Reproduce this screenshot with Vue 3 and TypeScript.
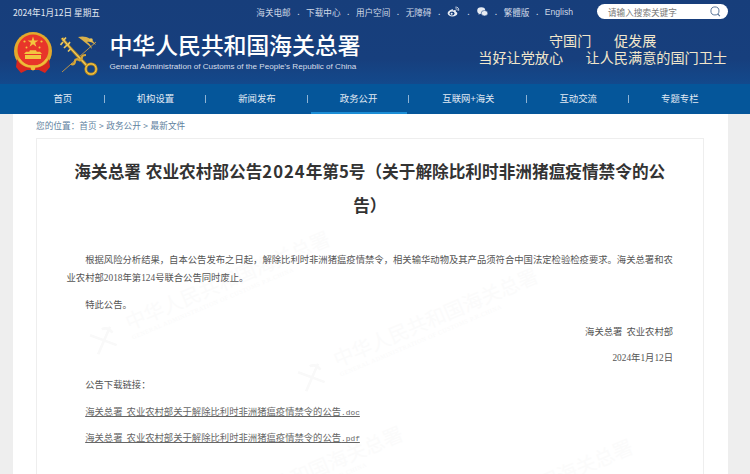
<template>
  <div class="page">
    <header class="site-head">
      <div class="top-bar">
        <span class="today">2024年1月12日 星期五</span>
        <div class="top-right">
          <nav class="top-links">
            <template v-for="(link, i) in topLinks" :key="link">
              <span v-if="i > 0" class="dot">.</span>
              <svg v-if="link === 'weibo'" class="top-icon" viewBox="0 0 14 12" width="13" height="11">
                <path d="M5.6 3.6C2.8 4.4.6 6.2.6 8c0 2 2.5 3.4 5.2 3.4 3 0 5.4-1.6 5.4-3.3 0-1.1-1-1.5-1.7-1.7.5-1.3 0-2-1-2.1-.6 0-1.5.3-2.2.6.3-1 .1-1.6-.7-1.3z" fill="#e8edf4" />
                <ellipse cx="5.4" cy="8.2" rx="2.7" ry="2.1" fill="#173f7d" />
                <circle cx="5" cy="8.4" r="1.1" fill="#e8edf4" />
                <path d="M9.4 1.2c2-.4 3.8 1.2 3.3 3.6M9.6 3c1-.2 1.7.5 1.5 1.5" fill="none" stroke="#e8edf4" stroke-width=".9" stroke-linecap="round" />
              </svg>
              <svg v-else-if="link === 'wechat'" class="top-icon" viewBox="0 0 12 11" width="11" height="10">
                <ellipse cx="4.6" cy="4" rx="4.4" ry="3.6" fill="#e8edf4" />
                <path d="M2 6.6 1.7 8.6 4 7.2z" fill="#e8edf4" />
                <ellipse cx="8.2" cy="6.8" rx="3.6" ry="3" fill="#e8edf4" stroke="#173f7d" stroke-width=".6" />
              </svg>
              <a v-else class="top-link">{{ link }}</a>
            </template>
          </nav>
          <div class="search">
            <span class="search-text">请输入搜索关键字</span>
            <svg viewBox="0 0 12 12" width="11" height="11">
              <circle cx="5.4" cy="5.4" r="4.4" fill="none" stroke="#4d6a90" stroke-width="1" />
              <path d="M8.6 8.8 10.8 11" stroke="#4d6a90" stroke-width="1.1" />
            </svg>
          </div>
        </div>
      </div>

      <div class="brand-row">
        <div class="brand">
          <svg class="emblem" viewBox="0 0 40 42" width="40" height="42">
            <circle cx="20" cy="19" r="19" fill="#e3a92c" />
            <circle cx="20" cy="18" r="15.5" fill="#e8352a" />
            <path d="m20 4.5 1.3 3.9h4.1l-3.3 2.4 1.3 3.9-3.4-2.4-3.4 2.4 1.3-3.9-3.3-2.4h4.1z" fill="#f3c63f" />
            <g fill="#f3c63f">
              <circle cx="11.5" cy="9.5" r="1.1" />
              <circle cx="28.5" cy="9.5" r="1.1" />
              <circle cx="13.5" cy="15.5" r="1" />
              <circle cx="26.5" cy="15.5" r="1" />
              <path d="M11 22h18l-2-2.2h-3.2l-.8-1.6h-6l-.8 1.6H13z" />
              <rect x="12" y="23" width="16" height="4" />
            </g>
            <path d="M4 27c3 6 9 9 16 9s13-3 16-9l1 8-5 6-6-3h-12l-6 3-5-6z" fill="#d7261f" />
            <path d="M6 27c3 5 8 7.6 14 7.6S31 32 34 27" fill="none" stroke="#f0bd3a" stroke-width="2" />
            <circle cx="20" cy="36" r="2.4" fill="#f0bd3a" />
          </svg>
          <svg class="customs" viewBox="0 0 40 42" width="40" height="42">
            <path d="M2 38 36 8" stroke="#b9924a" stroke-width="1" />
            <path d="M2 4c4 6 17 19 25 28" fill="none" stroke="#b98a20" stroke-width="3" />
            <path d="M2 4c4 6 17 19 25 28" fill="none" stroke="#f0cf6a" stroke-width="1.2" />
            <path d="M3 8 .5 11M6 3.5 3 7M7 11 4 14M10 8 7.5 11.5M10.5 15l-2.5 2.5" stroke="#ecc85f" stroke-width="1.7" />
            <circle cx="31" cy="35" r="5.2" fill="none" stroke="#c8951f" stroke-width="2.8" />
            <circle cx="31" cy="35" r="5.2" fill="none" stroke="#f1c84f" stroke-width="1" />
            <path d="M11 30c3 1 4-1 4-3s3-2 4-1 3-1 3-3 3-2 4-2" fill="none" stroke="#d5a536" stroke-width="2.2" />
            <path d="M18 3c7-2 14 1 18 8-4-3-7-4-9-3 2 1 4 3 5 7-4-5-9-8-14-12z" fill="#d9b04a" />
            <circle cx="31" cy="6" r="1.8" fill="#e9c35a" />
          </svg>
          <div class="brand-text">
            <div class="brand-cn">中华人民共和国海关总署</div>
            <div class="brand-en">General Administration of Customs of the People's Republic of China</div>
          </div>
        </div>
        <div class="motto">
          <div class="motto-line"><span>守国门</span><span>促发展</span></div>
          <div class="motto-line"><span>当好让党放心</span><span>让人民满意的国门卫士</span></div>
        </div>
      </div>
    </header>

    <nav class="main-nav">
      <a
        v-for="item in navItems"
        :key="item.label"
        class="nav-item"
        :class="{ active: item.active, wide: item.label.length > 4 }"
      >{{ item.label }}</a>
    </nav>

    <main class="content">
      <div class="crumbs">您的位置：首页 &gt; 政务公开 &gt; 最新文件</div>
      <article class="card">
        <div class="watermarks">
          <div v-for="(m, i) in marks" :key="i" class="mark" :style="{ left: m.x + 'px', top: m.y + 'px' }">
            <svg viewBox="0 0 24 24" width="26" height="26" class="mark-icon">
              <path d="M2 3 21 21M2 22 22 3M14 2c4 0 7 3 8 7" fill="none" stroke="#f9f9f9" stroke-width="2.4" />
            </svg>
            <div>
              <div class="mark-cn">中华人民共和国海关总署</div>
              <div class="mark-en">GENERAL ADMINISTRATION OF CUSTOMS P.R.CHINA</div>
            </div>
          </div>
        </div>
        <div class="card-body">
          <h1 class="title">海关总署 农业农村部公告<span class="year">2024</span>年第5号（关于解除比利时非洲猪瘟疫情禁令的公告）</h1>
          <p class="indent">根据风险分析结果，自本公告发布之日起，解除比利时非洲猪瘟疫情禁令，相关输华动物及其产品须符合中国法定检验检疫要求。海关总署和农业农村部<span class="num">2018</span>年第<span class="num">124</span>号联合公告同时废止。</p>
          <p class="indent">特此公告。</p>
          <p class="right">海关总署 农业农村部</p>
          <p class="right"><span class="num">2024</span>年<span class="num">1</span>月<span class="num">12</span>日</p>
          <p class="indent">公告下载链接：</p>
          <p class="indent"><a class="file">海关总署 农业农村部关于解除比利时非洲猪瘟疫情禁令的公告<span class="ext">.doc</span></a></p>
          <p class="indent"><a class="file">海关总署 农业农村部关于解除比利时非洲猪瘟疫情禁令的公告<span class="ext">.pdf</span></a></p>
        </div>
      </article>
    </main>
  </div>
</template>

<script setup lang="ts">
interface NavItem {
  label: string;
  active?: boolean;
}

const topLinks: string[] = [
  "海关电邮",
  "下载中心",
  "用户空间",
  "无障碍",
  "weibo",
  "wechat",
  "繁體版",
  "English",
];

const navItems: NavItem[] = [
  { label: "首页" },
  { label: "机构设置" },
  { label: "新闻发布" },
  { label: "政务公开", active: true },
  { label: "互联网+海关" },
  { label: "互动交流" },
  { label: "专题专栏" },
];

// 水印位置，相对卡片
const marks = [
  { x: 59.5, y: 187.5 },
  { x: 267.5, y: 224.5 },
  { x: 132.5, y: 383 },
  { x: 362.5, y: 395.5 },
];
</script>

<style scoped>
.page {
  height: 474px;
  overflow: hidden;
  background: #eeeeee;
  font-family: "Noto Sans CJK SC", sans-serif;
}

.site-head {
  height: 84px;
  background: linear-gradient(#173e7b 0, #173f7d 70%, #13498c 100%);
}

.top-bar {
  display: flex;
  justify-content: space-between;
  align-items: center;
  height: 23px;
  padding: 0 22px 0 13px;
}

.today {
  font-size: 8.6px;
  color: #e4e9f2;
}

.top-right {
  display: flex;
  align-items: center;
  gap: 24px;
}

.top-links {
  display: flex;
  align-items: center;
  gap: 6.5px;
  font-size: 8.6px;
  color: #cfd8e6;
}

.top-link {
  font-family: "Liberation Sans", "Noto Sans CJK SC", sans-serif;
  white-space: nowrap;
}

.dot {
  position: relative;
  top: -1px;
  color: #cfd8e6;
}

.top-icon {
  display: block;
  margin: 0 0.5px;
}

.search {
  display: flex;
  align-items: center;
  justify-content: space-between;
  width: 131px;
  height: 15px;
  padding: 0 7px 0 11px;
  box-sizing: border-box;
  background: #ffffff;
  border-radius: 8px;
}

.search-text {
  font-size: 8.6px;
  color: #777777;
}

.brand-row {
  display: flex;
  justify-content: space-between;
  padding: 9px 23px 0 13px;
}

.brand {
  display: flex;
  align-items: flex-start;
}

.customs {
  margin: 2px 0 0 7px;
}

.brand-text {
  margin: 0 0 0 9.5px;
}

.brand-cn {
  margin-top: -2px;
  font-size: 23px;
  line-height: 29px;
  letter-spacing: -0.2px;
  font-weight: 500;
  color: #ffffff;
  white-space: nowrap;
}

.brand-en {
  font-family: "Liberation Sans", sans-serif;
  font-size: 8.1px;
  line-height: 9px;
  margin-top: 3px;
  color: #d8dfea;
  white-space: nowrap;
}

.motto {
  color: #f2e7cb;
  font-size: 14.15px;
  line-height: 17px;
  text-align: center;
}

.motto-line {
  display: flex;
  justify-content: center;
  gap: 22.5px;
}

.main-nav {
  display: flex;
  height: 30px;
  padding-left: 3px;
  background: #05569a;
}

.nav-item {
  position: relative;
  width: 101.6px;
  box-sizing: border-box;
  font-size: 9.4px;
  line-height: 29px;
  text-align: center;
  color: #e2eaf4;
}

.nav-item:first-child {
  padding-left: 18px;
}

.nav-item.wide {
  width: 118px;
}

.nav-item:not(:last-child)::after {
  content: "";
  position: absolute;
  right: 0;
  top: 11px;
  width: 1px;
  height: 8px;
  background: #8fb3d4;
}

.nav-item.active::before {
  content: "";
  position: absolute;
  left: 3px;
  right: 2px;
  bottom: 0;
  height: 2px;
  background: #1c8ed6;
}

.content {
  width: 715px;
  height: 360px;
  margin-left: 13px;
  padding: 0 0 0 23px;
  box-sizing: border-box;
  background: #ffffff;
  overflow: hidden;
}

.crumbs {
  height: 24px;
  font-size: 8.67px;
  line-height: 23px;
  word-spacing: 0.5px;
  color: #5e7f9e;
}

.card {
  position: relative;
  width: 668px;
  height: 400px;
  box-sizing: border-box;
  border: 1.5px solid #eeeeee;
  overflow: hidden;
}

.watermarks {
  position: absolute;
  inset: 0;
}

.mark {
  position: absolute;
  display: flex;
  align-items: flex-end;
  gap: 14px;
  transform: rotate(-23deg);
  transform-origin: left bottom;
}

.mark-cn {
  font-family: "Liberation Serif", "Noto Sans CJK SC", serif;
  font-size: 20px;
  line-height: 22px;
  color: #fbfbfb;
  white-space: nowrap;
}

.mark-en {
  font-family: "Liberation Serif", serif;
  font-size: 6px;
  line-height: 8px;
  letter-spacing: 0.6px;
  color: #fafafa;
  white-space: nowrap;
}

.card-body {
  position: relative;
  padding: 14.5px 0 0 29.5px;
  width: 606.6px;
  font-size: 9.33px;
  line-height: 18.67px;
  word-spacing: 2px;
  color: #555555;
}

.title {
  margin: 0 0 28px;
  font-size: 16.67px;
  line-height: 34px;
  font-weight: 700;
  word-spacing: 1px;
  text-align: center;
  color: #333333;
}

.year {
  letter-spacing: 1px;
}

.card-body p {
  margin: 0 0 8px;
}

.card-body p.indent {
  text-indent: 2em;
}

.card-body p.right {
  text-align: right;
}

.num {
  font-family: "Liberation Serif", serif;
  line-height: 0;
}

.ext {
  font-family: "Liberation Mono", monospace;
  font-size: 7.8px;
  line-height: 0;
}

.file {
  color: #666666;
  text-decoration: underline;
}
</style>

<style>
html,
body {
  overflow: hidden;
}
</style>
